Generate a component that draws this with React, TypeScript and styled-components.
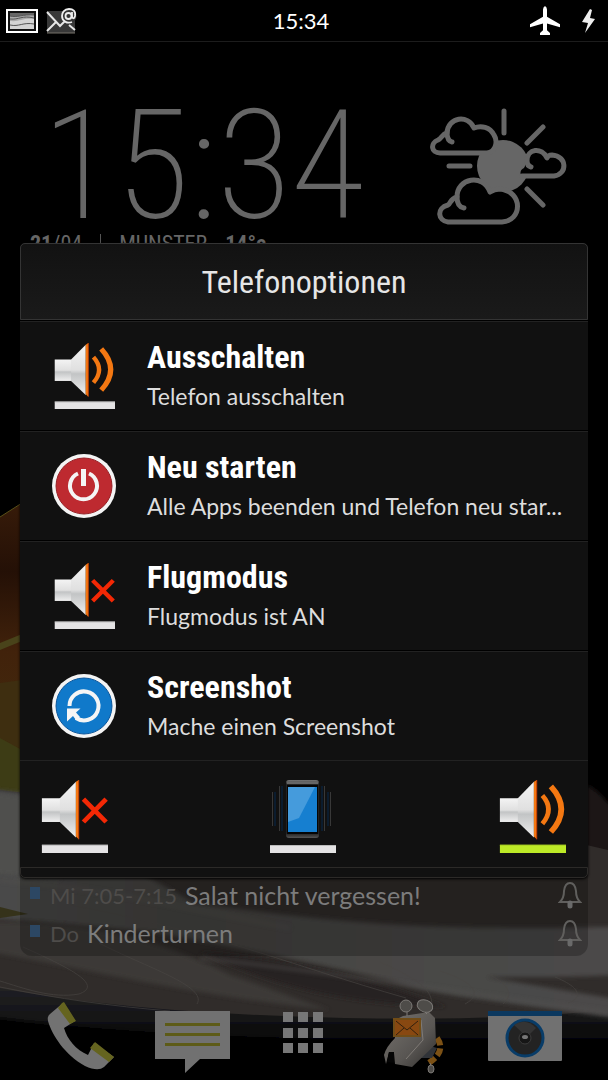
import React from "react";
import styled, { createGlobalStyle } from "styled-components";

const condensed = `"Roboto Condensed", "Liberation Sans Narrow", Roboto, sans-serif`;
const casual = `Lato, "Open Sans", sans-serif`;

const GlobalStyle = createGlobalStyle`
  * { box-sizing: border-box; }
  body { margin: 0; background: #000; font-family: ${casual}; }
  button, ul, li, h1, p { margin: 0; padding: 0; }
  button { border: 0; background: none; color: inherit; text-align: left; cursor: pointer; }
  ul { list-style: none; }
  svg { display: block; flex: none; }
`;

const Screen = styled.div`
  position: relative;
  display: flex;
  flex-direction: column;
  min-height: 100vh;
  overflow: hidden;
  background: #000;
`;

const Wallpaper = styled.svg`
  position: absolute;
  inset: 0;
  width: 100%;
  height: 100%;
`;

const StatusBar = styled.header`
  position: relative;
  display: grid;
  grid-template-columns: 1fr auto 1fr;
  align-items: center;
  height: 42px;
  padding: 0 12px 0 6px;
  border-bottom: 1px solid #1c1c1c;
  background: #000;
  color: #fff;
  font-size: 22px;
`;

const StatusIcons = styled.div<{ $end?: boolean }>`
  display: flex;
  align-items: center;
  gap: ${(p) => (p.$end ? "20px" : "8px")};
  justify-content: ${(p) => (p.$end ? "flex-end" : "flex-start")};
`;

const Home = styled.main`
  position: relative;
  display: flex;
  flex: 1;
  flex-direction: column;
  color: #666;
`;

const ClockRow = styled.section`
  display: flex;
  justify-content: space-between;
  align-items: flex-start;
  padding: 64px 40px 0 42px;
`;

const Clock = styled.time`
  font-family: "Roboto Condensed", Roboto, sans-serif;
  font-weight: 250;
  font-size: 152px;
  line-height: 120px;
  white-space: nowrap;
`;

const DateLine = styled.p`
  display: flex;
  align-items: center;
  gap: 18px;
  padding: 4px 30px 0;
  font-family: ${condensed};
  font-size: 22px;
  line-height: 24px;
`;

const Divider = styled.span`
  width: 1px;
  height: 20px;
  background: #555;
`;

const Agenda = styled.ul`
  margin: auto 20px 0;
  padding: 40px 6px 4px 10px;
  border-radius: 0 0 12px 12px;
  background: rgba(0, 0, 0, 0.24);
`;

const AgendaItem = styled.li`
  display: flex;
  align-items: center;
  height: 38px;
  font-size: 25px;
  color: #7c7c7c;
`;

const Marker = styled.span`
  width: 10px;
  height: 12px;
  margin: 0 10px 4px 0;
  background: #2c4763;
`;

const When = styled.span`
  margin-right: 8px;
  color: #4e4c4a;
  font-size: 22px;
`;

const Summary = styled.span`
  flex: 1;
  white-space: nowrap;
`;

const Dock = styled.nav`
  display: grid;
  grid-template-columns: repeat(5, 1fr);
  place-items: center;
  height: 88px;
  margin-top: 36px;
  padding: 0 27px 0 25px;
`;

const Overlay = styled.div`
  position: absolute;
  inset: 41px 0 0;
  display: flex;
  align-items: center;
  padding: 0 20px;
`;

const Dialog = styled.section`
  flex: 1;
  min-width: 0;
  border-radius: 5px;
  background: #111;
  box-shadow: 0 1px 3px #000;
`;

const DialogTitle = styled.h1`
  height: 77px;
  border: 1px solid #343434;
  border-radius: 5px 5px 0 0;
  background: linear-gradient(#121212, #1a1a1a);
  color: #e6e6e6;
  font-family: ${condensed};
  font-weight: 400;
  font-size: 32px;
  line-height: 77px;
  text-align: center;
`;

const Option = styled.button`
  display: flex;
  align-items: center;
  gap: 30px;
  width: 100%;
  height: 110px;
  padding: 0 16px 0 31px;
  border-top: 1px solid #000;
  box-shadow: inset 0 1px #222;
`;

const OptionIcon = styled.span`
  display: flex;
  justify-content: center;
  width: 66px;
`;

const OptionText = styled.span`
  display: flex;
  flex: 1;
  flex-direction: column;
  min-width: 0;
`;

const OptionName = styled.span`
  color: #fff;
  font-family: ${condensed};
  font-weight: 700;
  font-size: 32px;
  line-height: 40px;
`;

const OptionHint = styled.span`
  color: #ddd;
  font-family: ${casual};
  font-size: 23px;
  line-height: 38px;
  white-space: nowrap;
`;

const SoundModes = styled.div`
  display: flex;
  justify-content: space-between;
  align-items: flex-start;
  height: 107px;
  padding: 19px 22px 0 20px;
  border-top: 1px solid #222;
`;

const DialogFoot = styled.div`
  height: 11px;
  border: 1px solid #2c2a28;
  border-radius: 0 0 5px 5px;
  background: #111;
`;

type SpeakerProps = { muted?: boolean; active?: boolean; width: number; height: number };

function Speaker({ muted, active, width, height }: SpeakerProps) {
  const id = `sp${muted ? "m" : "s"}${active ? "a" : ""}${width}`;
  return (
    <svg width={width} height={height} viewBox="0 0 72 80" preserveAspectRatio="none" aria-hidden="true">
      <defs>
        <linearGradient id={id} x1="0" y1="0" x2="0" y2="1">
          <stop offset="0" stopColor="#f4f4f4" />
          <stop offset=".5" stopColor="#e0e0e0" />
          <stop offset=".58" stopColor="#c2c4c5" />
          <stop offset="1" stopColor="#efefef" />
        </linearGradient>
      </defs>
      <rect x="2" y="20" width="20" height="26" fill={`url(#${id})`} />
      <path d="M21 20 38 2V63L21 46Z" fill={`url(#${id})`} />
      <path d="M38 2 41 0V65L38 62Z" fill="#f47812" />
      <path d="M41 0V65" stroke="#c93c07" strokeWidth="1" />
      {muted ? (
        <path d="M46 21 70 46M70 21 46 46" stroke="#f32805" strokeWidth="5" />
      ) : (
        <g fill="none" stroke="#f47812">
          <path d="M47 17Q60 32 47 48" strokeWidth="5" />
          <path d="M56 7Q78 32 56 57" strokeWidth="6" />
        </g>
      )}
      <rect x="2" y="71" width="70" height="9" fill={active ? "#bdea27" : "#e4e3e4"} />
      <path d="M2 71.500H72" stroke={active ? "#a7cf22" : "#bbb"} />
    </svg>
  );
}

const Vibrate = () => (
  <svg width="70" height="73" viewBox="0 3 70 73" aria-hidden="true">
    <defs>
      <linearGradient id="body" x1="0" y1="0" x2="0" y2="1">
        <stop offset="0" stopColor="#777" />
        <stop offset=".08" stopColor="#222" />
        <stop offset=".92" stopColor="#222" />
        <stop offset="1" stopColor="#555" />
      </linearGradient>
    </defs>
    <rect x="18" y="3" width="33" height="58" rx="3" fill="url(#body)" />
    <path d="M19 4.500H50V7H19Z" fill="#666" />
    <rect x="19" y="8" width="31" height="49" fill="#050505" />
    <rect x="20" y="10" width="29" height="45" fill="#167fd0" />
    <path d="M20 10H47L31 41 20 45Z" fill="#459bdc" />
    <path d="M11.500 9V54M4.500 15V49M56.500 9V54M62.500 15V49" stroke="#383838" />
    <path d="M14 9V54M7 15V49M54 9V54M60 15V49" stroke="#06294d" />
    <rect x="2" y="68" width="66" height="8" fill="#e4e3e4" />
    <path d="M2 68.500H68" stroke="#bbb" />
  </svg>
);

const Power = () => (
  <svg width="66" height="66" viewBox="0 0 66 66" aria-hidden="true">
    <circle cx="33" cy="33" r="32" fill="#f4f4f4" />
    <circle cx="33" cy="33" r="28" fill="#be2a30" stroke="#962126" />
    <path d="M27 20.500A13.500 13.500 0 1 0 38 20.500" fill="none" stroke="#f5f5f5" strokeWidth="4" />
    <path d="M32.500 16V33" stroke="#be2a30" strokeWidth="9" />
    <path d="M32.500 16V33" stroke="#f5f5f5" strokeWidth="5" />
  </svg>
);

const Restart = () => (
  <svg width="66" height="66" viewBox="0 0 66 66" aria-hidden="true">
    <circle cx="33" cy="33" r="32" fill="#f4f4f4" />
    <circle cx="33" cy="33" r="28" fill="#1079ca" stroke="#0a559b" />
    <path d="M18.500 33A14.500 14.500 0 1 1 25 45" fill="none" stroke="#f5f5f5" strokeWidth="4" />
    <path d="M16 35.500H29.500L25 39.500 29 44 25 47 22 43 16 48.500Z" fill="#f5f5f5" />
  </svg>
);

const Gallery = () => (
  <svg width="32" height="24" viewBox="0 0 32 24" aria-hidden="true">
    <rect x="1" y="1" width="30" height="22" fill="#111" stroke="#fff" strokeWidth="2" />
    <rect x="4" y="4" width="24" height="16" fill="#aaa" />
    <path d="M4 12C14 13 16 9 28 10V20H4Z" fill="#d4d4d4" />
    <path d="M4 4H28V6C18 5 12 9 4 7Z" fill="#666" />
    <path d="M4 7C11 9 17 5 28 6M4 10C13 11 16 6 28 9M4 16C13 18 17 13 28 15" fill="none" stroke="#555" />
  </svg>
);

const Mail = () => (
  <svg width="32" height="28" viewBox="0 0 32 28" aria-hidden="true">
    <rect x="1" y="4" width="28" height="22" fill="#383838" />
    <path d="M1 26H29" stroke="#77736a" />
    <path d="M1 5 14 19 20 13M1 24 10 15M29 23 23 18" fill="none" stroke="#e6e6e6" strokeWidth="2" />
    <circle cx="23" cy="9" r="7.500" fill="#333" />
    <circle cx="22.500" cy="9" r="3" fill="none" stroke="#eee" strokeWidth="1.800" />
    <path d="M26 5V10Q28 13 29 9C30 4 27 2 23 2C18 2 16 6 16 9C16 14 21 17 26 15" fill="none" stroke="#eee" strokeWidth="1.800" />
  </svg>
);

const Plane = () => (
  <svg width="30" height="29" viewBox="0 0 30 30" preserveAspectRatio="none" aria-hidden="true">
    <path d="M15 0Q17 1 17 4V11L30 19V22L17 18 17 25 20 28V30H10V28L13 25 13 18 0 22V19L13 11V4Q13 1 15 0Z" fill="#fff" />
  </svg>
);

const Bolt = () => (
  <svg width="16" height="26" viewBox="0 0 16 26" aria-hidden="true">
    <path d="M10 1 2 14 8 15 5 25 15 11 10 10 12 2Z" fill="#eee" />
  </svg>
);

const Weather = () => (
  <svg width="138" height="122" viewBox="0 0 138 122" aria-hidden="true">
    <circle cx="73" cy="60" r="26" fill="#666" />
    <g stroke="#666" strokeWidth="5" strokeLinecap="round" strokeLinejoin="round">
      <path d="M74 5V27M113 21 97 37M19 60H40M97 83 113 99" fill="none" />
      <path d="M10 47H57C66 46 68 35 64 29C60 21 51 19 44 22C38 8 18 11 17 27C12 28 12 32 8 34C0 37 1 47 10 47Z" fill="#000" />
      <path d="M17 26Q17 35 22 36" fill="none" />
      <path d="M18 116H72C92 115 94 86 70 83Q64 83 60 86C53 67 27 72 27 91C20 93 21 97 18 99C6 102 8 115 18 116Z" fill="#000" />
      <path d="M27 91Q27 101 34 102" fill="none" />
      <path d="M93 70H124C138 68 137 50 122 49Q118 49 117 52C112 41 97 42 97 55C95 57 96 59 94 62C89 64 90 70 93 70Z" fill="#000" stroke="none" />
      <path d="M92 70H124C138 68 137 50 122 49Q118 49 117 52C112 41 97 42 97 55Q97 60 101 61" fill="none" />
    </g>
  </svg>
);

const Bell = () => (
  <svg width="24" height="28" viewBox="0 0 24 28" aria-hidden="true">
    <path d="M2 21Q6 17 6 10Q7 2 12 2Q17 2 18 10Q18 17 22 21Z" fill="none" stroke="#605f5d" strokeWidth="2" />
    <path d="M12 22V25" stroke="#6a6a6a" strokeWidth="5" strokeLinecap="round" />
  </svg>
);

const dockIcon = { width: 76, height: 76, viewBox: "0 0 76 76", "aria-hidden": true };

const Phone = () => (
  <svg {...dockIcon}>
    <g transform="translate(4 3)">
      <path d="M3 13 16 2 28 20 17 27C20 38 29 49 41 54L47 42 67 56 57 66Q51 71 38 65C18 54 5 34 1 20Q0 15 3 13Z" fill="#727272" />
      <path d="M15 2 17 1 29 20 23 23 11 7ZM48 41 67 56 62 61 43 47Z" fill="#65641f" />
    </g>
  </svg>
);

const Message = () => (
  <svg {...dockIcon}>
    <path d="M1 13H76V61H46L31 75V61H1Z" fill="#717171" />
    <path d="M11 26.500H66M11 36.500H66M11 46.500H66" stroke="#5d5b18" strokeWidth="3" />
  </svg>
);

const Apps = () => (
  <svg {...dockIcon}>
    {[14, 30, 45].map((y) =>
      [18, 33, 48].map((x) => <rect key={`${x}-${y}`} x={x} y={y} width="10" height="10" fill="#777" />)
    )}
  </svg>
);

const Robot = () => (
  <svg {...dockIcon}>
    <defs>
      <linearGradient id="metal" x1="0" y1="0" x2="1" y2="1">
        <stop offset="0" stopColor="#77736e" />
        <stop offset=".6" stopColor="#595653" />
        <stop offset="1" stopColor="#302e2c" />
      </linearGradient>
    </defs>
    <g transform="translate(7 0)">
      <path d="M54 40Q64 54 44 66" fill="none" stroke="#7c5115" strokeWidth="6" strokeDasharray="8 3" />
      <path d="M40 46 54 50 49 60 35 60Z" fill="#303338" />
      <path d="M12 22 20 18 46 14 52 20 53 46 29 69 12 66 11 55 6 54 3 66 1 57Q3 49 12 40Z" fill="url(#metal)" />
      <path d="M38 22 40 42 23 61" fill="none" stroke="#807b76" />
      <path d="M6 54H11V65L4 64Z" fill="#050505" />
      <g fill="#4e4c49" stroke="#7c7976">
        <ellipse cx="23" cy="8" rx="6" ry="6" />
        <ellipse cx="42" cy="8" rx="8" ry="6" transform="rotate(20 42 8)" />
        <path d="M24 14V18M42 14 44 16M47 65 48 68" />
        <ellipse cx="48" cy="71" rx="3" ry="4" />
      </g>
      <rect x="11" y="21" width="26" height="17" fill="#884811" stroke="#704c17" strokeWidth="2" />
      <path d="M13 23 24 32 35 23M13 37 21 30M35 37 27 30" fill="none" stroke="#32200e" />
    </g>
  </svg>
);

const Camera = () => (
  <svg {...dockIcon}>
    <g transform="translate(0 11)">
      <rect x="1" y="2" width="74" height="50" rx="1" fill="#717171" />
      <rect x="1" y="2" width="74" height="5" fill="#0b385f" />
      <circle cx="38" cy="29" r="18" fill="#232323" stroke="#083c68" strokeWidth="3" />
      <path d="M27 16Q39 8 49 19L40 28Z" fill="#343434" />
      <circle cx="38" cy="29" r="6" fill="#161616" stroke="#3c3c3c" />
      <ellipse cx="38" cy="28" rx="3" ry="2" fill="#777" />
    </g>
  </svg>
);

const options = [
  { name: "Ausschalten", hint: "Telefon ausschalten", icon: <Speaker width={62} height={66} /> },
  { name: "Neu starten", hint: "Alle Apps beenden und Telefon neu star...", icon: <Power /> },
  { name: "Flugmodus", hint: "Flugmodus ist AN", icon: <Speaker width={62} height={66} muted /> },
  { name: "Screenshot", hint: "Mache einen Screenshot", icon: <Restart /> },
];

export default function App() {
  return (
    <Screen>
      <GlobalStyle />
      <Wallpaper viewBox="0 0 608 1080" preserveAspectRatio="none" aria-hidden="true">
        <defs>
          <linearGradient id="amber" x1="0" y1="0" x2="0" y2="1">
            <stop offset="0" stopColor="#3a1d0a" />
            <stop offset=".25" stopColor="#241006" />
            <stop offset=".5" stopColor="#41220b" />
            <stop offset="1" stopColor="#44300f" />
          </linearGradient>
          <linearGradient id="mist" x1="0" y1="0" x2="1" y2="0">
            <stop offset="0" stopColor="#4b4a49" />
            <stop offset=".3" stopColor="#454442" />
            <stop offset="1" stopColor="#4c4b4a" />
          </linearGradient>
          <linearGradient id="shade" x1="0" y1="0" x2="0" y2="1">
            <stop offset="0" stopColor="#28282b" />
            <stop offset=".6" stopColor="#151517" />
            <stop offset="1" stopColor="#000" />
          </linearGradient>
          <filter id="soft" x="-10%" y="-20%" width="120%" height="140%"><feGaussianBlur stdDeviation="2" /></filter>
        </defs>
        <path d="M0 517 40 492V810H0Z" fill="url(#amber)" />
        <path d="M0 517 22 503" stroke="#5a5018" />
        <path d="M0 643 22 634V641L0 650Z" fill="#49431a" />
        <path d="M0 683 22 680V750L0 738Z" fill="#3e2e10" />
        <path d="M0 738 22 750V800H0Z" fill="#3d3c15" />
        <path d="M586 785C600 790 604 800 620 815V860H586Z" fill="#1b1816" filter="url(#soft)" />
        <path d="M-20 970C160 1008 360 1025 640 1004V1048C400 1038 200 1044 -20 1016Z" fill="url(#shade)" filter="url(#soft)" />
        <path d="M0 790C160 810 400 800 608 850V1010C460 1026 160 1020 0 988Z" fill="#302c2a" />
        <path d="M-20 788 30 794 100 850 194 903C349 925 446 932 640 926V974C560 978 520 977 485 977L640 1003V1022C500 1000 440 998 388 980 300 960 250 950 155 932L-20 917Z" fill="url(#mist)" filter="url(#soft)" />
        <path d="M-20 790 22 796 60 880 -20 872Z" fill="#504f4e" filter="url(#soft)" />
        <path d="M0 907 28 914 0 918Z" fill="#35321a" />
        <path d="M200 952C280 958 370 978 446 1007 340 1004 270 985 200 952Z" fill="#282422" filter="url(#soft)" />
        <path d="M-20 922C90 920 160 940 230 975 280 992 300 1000 330 1010 190 995 100 972 -20 950Z" fill="#403e3b" opacity=".8" filter="url(#soft)" />
        <path d="M0 880C120 890 190 910 290 928" fill="none" stroke="#55524f" strokeWidth="3" opacity=".5" filter="url(#soft)" />
        <path d="M200 958C300 968 400 985 608 1012" fill="none" stroke="#525150" strokeWidth="3" opacity=".6" filter="url(#soft)" />
        <g fill="none" stroke="#4a4744" opacity=".6">
          <path d="M0 987C60 999 110 1006 170 1011" />
          <path d="M23 947C70 968 104 985 79 994 52 999 23 988 0 981" />
          <path d="M99 943C145 967 208 986 197 1004" />
          <path d="M380 962C420 980 432 990 432 1005" />
          <path d="M440 971C480 984 480 996 465 1004" />
          <path d="M490 975C515 988 510 998 503 1004" />
          <path d="M555 977C587 990 578 1000 568 1003" />
          <path d="M70 905C208 930 290 965 406 998" />
        </g>
      </Wallpaper>
      <StatusBar>
        <StatusIcons>
          <Gallery />
          <Mail />
        </StatusIcons>
        <time>15:34</time>
        <StatusIcons $end>
          <Plane />
          <Bolt />
        </StatusIcons>
      </StatusBar>
      <Home>
        <ClockRow>
          <Clock>15:34</Clock>
          <Weather />
        </ClockRow>
        <DateLine>
          <span><b>21</b>/04</span>
          <Divider />
          <span>MUNSTER</span>
          <b>14°c</b>
        </DateLine>
        <Agenda>
          <AgendaItem>
            <Marker />
            <When>Mi 7:05-7:15</When>
            <Summary>Salat nicht vergessen!</Summary>
            <Bell />
          </AgendaItem>
          <AgendaItem>
            <Marker />
            <When>Do</When>
            <Summary>Kinderturnen</Summary>
            <Bell />
          </AgendaItem>
        </Agenda>
        <Dock>
          <button aria-label="Telefon"><Phone /></button>
          <button aria-label="Nachrichten"><Message /></button>
          <button aria-label="Apps"><Apps /></button>
          <button aria-label="E-Mail"><Robot /></button>
          <button aria-label="Kamera"><Camera /></button>
        </Dock>
      </Home>
      <Overlay>
        <Dialog role="dialog" aria-labelledby="dialog-title">
          <DialogTitle id="dialog-title">Telefonoptionen</DialogTitle>
          {options.map((o) => (
            <Option key={o.name}>
              <OptionIcon>{o.icon}</OptionIcon>
              <OptionText>
                <OptionName>{o.name}</OptionName>
                <OptionHint>{o.hint}</OptionHint>
              </OptionText>
            </Option>
          ))}
          <SoundModes>
            <button aria-label="Lautlos"><Speaker width={68} height={73} muted /></button>
            <button aria-label="Vibration"><Vibrate /></button>
            <button aria-label="Ton an"><Speaker width={68} height={73} active /></button>
          </SoundModes>
          <DialogFoot />
        </Dialog>
      </Overlay>
    </Screen>
  );
}
